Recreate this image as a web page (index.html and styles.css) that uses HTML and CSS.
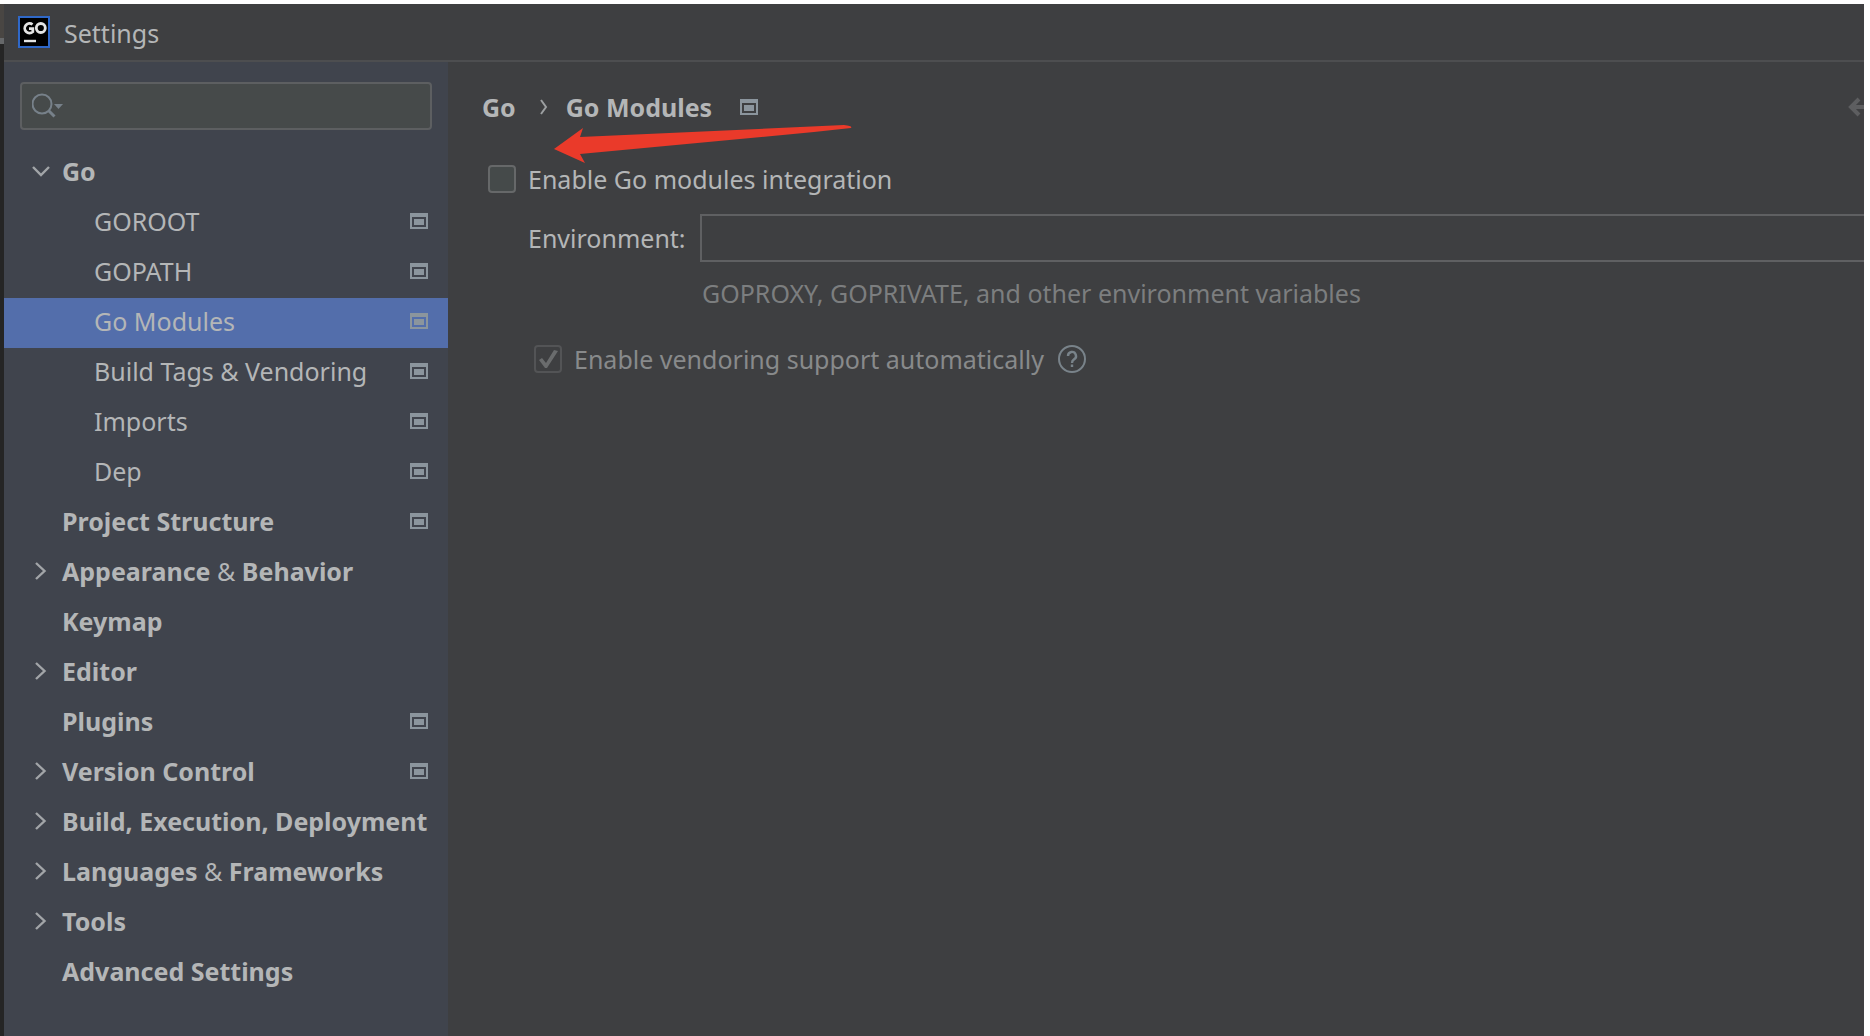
FILE: index.html
```html
<!DOCTYPE html>
<html lang="en">
<head>
<meta charset="utf-8">
<title>Settings</title>
<link rel="stylesheet" href="styles.css">
</head>
<body>
<svg class="defs" aria-hidden="true">
  <symbol id="scope" viewBox="0 0 18 16"><path d="M0 0h18v16H0zM2 4v10h14V4z" fill="currentColor" fill-rule="evenodd"/><path d="M4 6h10v6H4z" fill="currentColor"/></symbol>
  <symbol id="right" viewBox="0 0 18 18"><path d="M4 1l8.500 8-8.500 8" fill="none" stroke="currentColor" stroke-width="2.400"/></symbol>
  <symbol id="down" viewBox="0 0 18 18"><path d="M1 5l8 8 8-8" fill="none" stroke="currentColor" stroke-width="2.400"/></symbol>
</svg>
<div class="window">
  <header class="titlebar">
    <svg class="logo" viewBox="0 0 32 32" aria-hidden="true">
      <rect x="1" y="1" width="30" height="30" fill="#000" stroke="#2f68c8" stroke-width="2"/>
      <path d="M14.500 8.500A4.800 4.800 0 1 0 14.800 15.800V12.600H11" fill="none" stroke="#e4e4e4" stroke-width="2.800"/>
      <circle cx="22.800" cy="12" r="4.500" fill="none" stroke="#e4e4e4" stroke-width="2.800"/>
      <path d="M6 25h12" stroke="#e4e4e4" stroke-width="2.400"/>
    </svg>
    <h1 class="title">Settings</h1>
  </header>
  <div class="body">
    <nav class="sidebar" aria-label="Settings categories">
      <label class="search">
        <svg class="search-icon" viewBox="0 0 34 26" aria-hidden="true"><circle cx="10" cy="11" r="9.500" fill="none" stroke="currentColor" stroke-width="2"/><path d="M16.500 17.500l6 6" stroke="currentColor" stroke-width="3"/><path d="M22 11h9l-4.500 5z" fill="currentColor"/></svg>
        <input class="search-input" type="text" aria-label="Search settings">
      </label>
      <ul class="tree">
        <li><a class="row group" href="#"><svg class="chev"><use href="#down"/></svg><span>Go</span></a></li>
        <li><a class="row child" href="#"><span>GOROOT</span><svg class="scope"><use href="#scope"/></svg></a></li>
        <li><a class="row child" href="#"><span>GOPATH</span><svg class="scope"><use href="#scope"/></svg></a></li>
        <li><a class="row child selected" href="#" aria-current="page"><span>Go Modules</span><svg class="scope"><use href="#scope"/></svg></a></li>
        <li><a class="row child" href="#"><span>Build Tags &amp; Vendoring</span><svg class="scope"><use href="#scope"/></svg></a></li>
        <li><a class="row child" href="#"><span>Imports</span><svg class="scope"><use href="#scope"/></svg></a></li>
        <li><a class="row child" href="#"><span>Dep</span><svg class="scope"><use href="#scope"/></svg></a></li>
        <li><a class="row group" href="#"><svg class="chev"></svg><span>Project Structure</span><svg class="scope"><use href="#scope"/></svg></a></li>
        <li><a class="row group" href="#"><svg class="chev"><use href="#right"/></svg><span>Appearance <span class="amp">&amp;</span> Behavior</span></a></li>
        <li><a class="row group" href="#"><svg class="chev"></svg><span>Keymap</span></a></li>
        <li><a class="row group" href="#"><svg class="chev"><use href="#right"/></svg><span>Editor</span></a></li>
        <li><a class="row group" href="#"><svg class="chev"></svg><span>Plugins</span><svg class="scope"><use href="#scope"/></svg></a></li>
        <li><a class="row group" href="#"><svg class="chev"><use href="#right"/></svg><span>Version Control</span><svg class="scope"><use href="#scope"/></svg></a></li>
        <li><a class="row group" href="#"><svg class="chev"><use href="#right"/></svg><span>Build, Execution, Deployment</span></a></li>
        <li><a class="row group" href="#"><svg class="chev"><use href="#right"/></svg><span>Languages <span class="amp">&amp;</span> Frameworks</span></a></li>
        <li><a class="row group" href="#"><svg class="chev"><use href="#right"/></svg><span>Tools</span></a></li>
        <li><a class="row group" href="#"><svg class="chev"></svg><span>Advanced Settings</span></a></li>
      </ul>
    </nav>
    <main class="content">
      <div class="crumbs">
        <a href="#">Go</a>
        <svg class="crumb-sep" viewBox="0 0 8 16" aria-hidden="true"><path d="M1 1l5 7-5 7" fill="none" stroke="currentColor" stroke-width="2"/></svg>
        <h2>Go Modules</h2>
        <svg class="scope"><use href="#scope"/></svg>
        <button class="back" type="button" aria-label="Back"><svg viewBox="0 0 16 20" aria-hidden="true"><path d="M11 2l-8 8 8 8M3 10h13" fill="none" stroke="currentColor" stroke-width="4"/></svg></button>
      </div>
      <svg class="pointer" viewBox="0 0 300 36" aria-hidden="true"><path d="M0 21L29 0l-3 9L290 -3q9 1 7 3L260 4 26 26l5 9z" fill="#ea3a2a"/></svg>
      <label class="check"><input type="checkbox"><span>Enable Go modules integration</span></label>
      <div class="field">
        <label for="env">Environment:</label>
        <input id="env" class="env" type="text" aria-describedby="env-hint">
        <p id="env-hint" class="hint">GOPROXY, GOPRIVATE, and other environment variables</p>
      </div>
      <div class="vendoring">
        <label class="check off"><input type="checkbox" checked disabled><span>Enable vendoring support automatically</span></label>
        <button class="help" type="button" aria-label="Help"><svg viewBox="0 0 28 28" aria-hidden="true"><circle cx="14" cy="14" r="13" fill="none" stroke="currentColor" stroke-width="2"/><path d="M10 11a4 4 0 1 1 6 3.400q-2 1.200-2 3.600M14 19.500v2.500" fill="none" stroke="currentColor" stroke-width="2.400"/></svg></button>
      </div>
    </main>
  </div>
</div>
</body>
</html>
```
FILE: styles.css
```css
* { box-sizing: border-box; }
body { margin: 0; background: #fff; font: 25px/34px "Noto Sans", "Open Sans", sans-serif; color: #b4b6b7; }
h1, h2, p, ul { margin: 0; padding: 0; font: inherit; }
ul { list-style: none; }
a { color: inherit; text-decoration: none; }
button { padding: 0; border: 0; background: none; color: inherit; }
svg { display: block; flex: none; }
.defs { display: none; }

.window { display: flex; flex-direction: column; min-height: calc(100vh - 4px); margin: 4px 6px 0 0; padding-left: 4px; background: linear-gradient(#494643 34px, #66686a 34px 40px, #252525 40px) 0 0 / 4px 100% no-repeat #3e3f41; }
.titlebar { display: flex; align-items: center; gap: 14px; height: 58px; padding: 0 14px; border-bottom: 2px solid #4d4e50; }
.logo { width: 32px; height: 32px; }
.title { padding-top: 2px; }
.body { display: flex; flex: 1; }

.sidebar { flex: none; width: 444px; padding-top: 20px; background: #40444d; }
.search { display: flex; align-items: center; height: 48px; margin: 0 16px 18px; padding: 0 10px; border: 2px solid #5d5f61; border-radius: 4px; background: #464a4a; color: #77818a; }
.search-icon { width: 34px; height: 26px; }
.search-input { flex: 1; min-width: 0; border: 0; outline: 0; background: none; color: inherit; font: inherit; }
.row { display: flex; align-items: center; height: 50px; padding: 0 20px 4px 28px; white-space: nowrap; }
.row .scope { margin-left: auto; }
.group { font-weight: 700; }
.amp { font-weight: 400; }
.child { padding-left: 90px; }
.selected { background: #536eab; }
.chev { width: 18px; height: 18px; margin-right: 12px; color: #a2a5a8; }
.scope { width: 18px; height: 16px; color: #8b959d; }

.content { position: relative; flex: 1; min-width: 0; padding: 28px 0 0 34px; }
.crumbs { display: flex; align-items: center; height: 34px; font-weight: 700; }
.crumb-sep { width: 8px; height: 16px; margin: 0 18px 0 24px; color: #9c9fa1; }
.crumbs .scope { margin-left: 28px; }
.back { margin-left: auto; color: #5d5e60; }
.back svg { width: 16px; height: 20px; }
.pointer { position: absolute; left: 106px; top: 66px; width: 300px; height: 36px; overflow: visible; }

.check { display: flex; align-items: center; gap: 12px; height: 34px; }
.content > .check { margin: 38px 0 0 6px; }
.check input { appearance: none; flex: none; width: 28px; height: 28px; margin: 0; border: 2px solid #666869; border-radius: 4px; background: #454a4a; }
.check input:disabled { border-color: #535456; background: none; }
.check input:checked::before { content: ""; display: block; width: 24px; height: 24px; background: #6a6c6d; clip-path: polygon(3px 13px, 6px 11px, 10px 16px, 18px 3px, 22px 4px, 11px 21px, 9px 21px); }
.off { color: #888a8b; }
.field { display: grid; grid-template-columns: 172px 1fr; align-items: center; row-gap: 14px; margin: 18px 0 0 46px; }
.env { width: 100%; height: 48px; padding: 0 10px; border: 2px solid #5f6062; border-right: 0; background: none; color: inherit; font: inherit; outline: 0; }
.hint { grid-column: 2; padding-left: 2px; color: #7c7e7f; }
.vendoring { display: flex; align-items: center; gap: 14px; margin: 32px 0 0 52px; }
.help { color: #79838a; }
.help svg { width: 28px; height: 28px; }
```
